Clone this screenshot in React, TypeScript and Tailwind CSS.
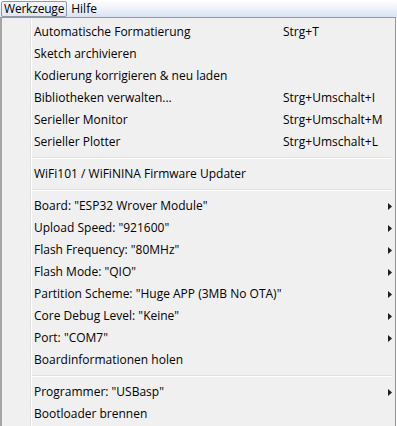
import React from "react";

type Item =
  | { kind: "sep" }
  | { kind: "item"; label: string; shortcut?: string; sub?: boolean };

const items: Item[] = [
  { kind: "item", label: "Automatische Formatierung", shortcut: "Strg+T" },
  { kind: "item", label: "Sketch archivieren" },
  { kind: "item", label: "Kodierung korrigieren & neu laden" },
  { kind: "item", label: "Bibliotheken verwalten...", shortcut: "Strg+Umschalt+I" },
  { kind: "item", label: "Serieller Monitor", shortcut: "Strg+Umschalt+M" },
  { kind: "item", label: "Serieller Plotter", shortcut: "Strg+Umschalt+L" },
  { kind: "sep" },
  { kind: "item", label: "WiFi101 / WiFiNINA Firmware Updater" },
  { kind: "sep" },
  { kind: "item", label: 'Board: "ESP32 Wrover Module"', sub: true },
  { kind: "item", label: 'Upload Speed: "921600"', sub: true },
  { kind: "item", label: 'Flash Frequency: "80MHz"', sub: true },
  { kind: "item", label: 'Flash Mode: "QIO"', sub: true },
  { kind: "item", label: 'Partition Scheme: "Huge APP (3MB No OTA)"', sub: true },
  { kind: "item", label: 'Core Debug Level: "Keine"', sub: true },
  { kind: "item", label: 'Port: "COM7"', sub: true },
  { kind: "item", label: "Boardinformationen holen" },
  { kind: "sep" },
  { kind: "item", label: 'Programmer: "USBasp"', sub: true },
  { kind: "item", label: "Bootloader brennen" },
];

function Arrow() {
  return (
    <svg width="4" height="7" viewBox="0 0 4 7" className="block">
      <path d="M0 0 L4 3.5 L0 7 Z" fill="#1e1e1e" />
    </svg>
  );
}

export default function App() {
  return (
    <div className="w-[397px] h-[426px] overflow-hidden bg-white font-['Open_Sans',sans-serif] text-[12px] text-black leading-none">
      <div className="h-[17px] flex items-center bg-gradient-to-b from-[#ffffff] via-[#eef2fa] to-[#d9e2f4]">
        <div className="ml-[1px] h-[16px] px-[2px] flex items-center rounded-[2px] border border-[#8e99a8] bg-gradient-to-b from-[#f4f6fb] to-[#e1e7f3] tracking-[-0.2px]">
          Werkzeuge
        </div>
        <div className="ml-[4px]">Hilfe</div>
      </div>
      <div className="w-[396px] h-[409px] flex border-t border-l-2 border-r border-t-[#979797] border-l-[#a5a5a5] border-r-[#979797] bg-[#f0f0f0]">
        <div className="w-[28px] shrink-0" />
        <div className="w-[2px] shrink-0 border-l border-l-[#e2e3e3] border-r border-r-white" />
        <div className="flex-1 flex flex-col pt-[3px]">
          {items.map((it, i) =>
            it.kind === "sep" ? (
              <div key={i} className="h-[10px] shrink-0 pt-[4px]">
                <div className="h-[1px] bg-[#e0e0e0] mr-[3px]" />
                <div className="h-[1px] bg-white mr-[3px]" />
              </div>
            ) : (
              <div key={i} className="h-[22px] shrink-0 flex items-center">
                <div className="w-[251px] shrink-0 pl-[2px] whitespace-nowrap">{it.label}</div>
                <div className="whitespace-nowrap">{it.shortcut ?? ""}</div>
                {it.sub && (
                  <div className="ml-auto mr-[3px]">
                    <Arrow />
                  </div>
                )}
              </div>
            )
          )}
        </div>
      </div>
    </div>
  );
}
